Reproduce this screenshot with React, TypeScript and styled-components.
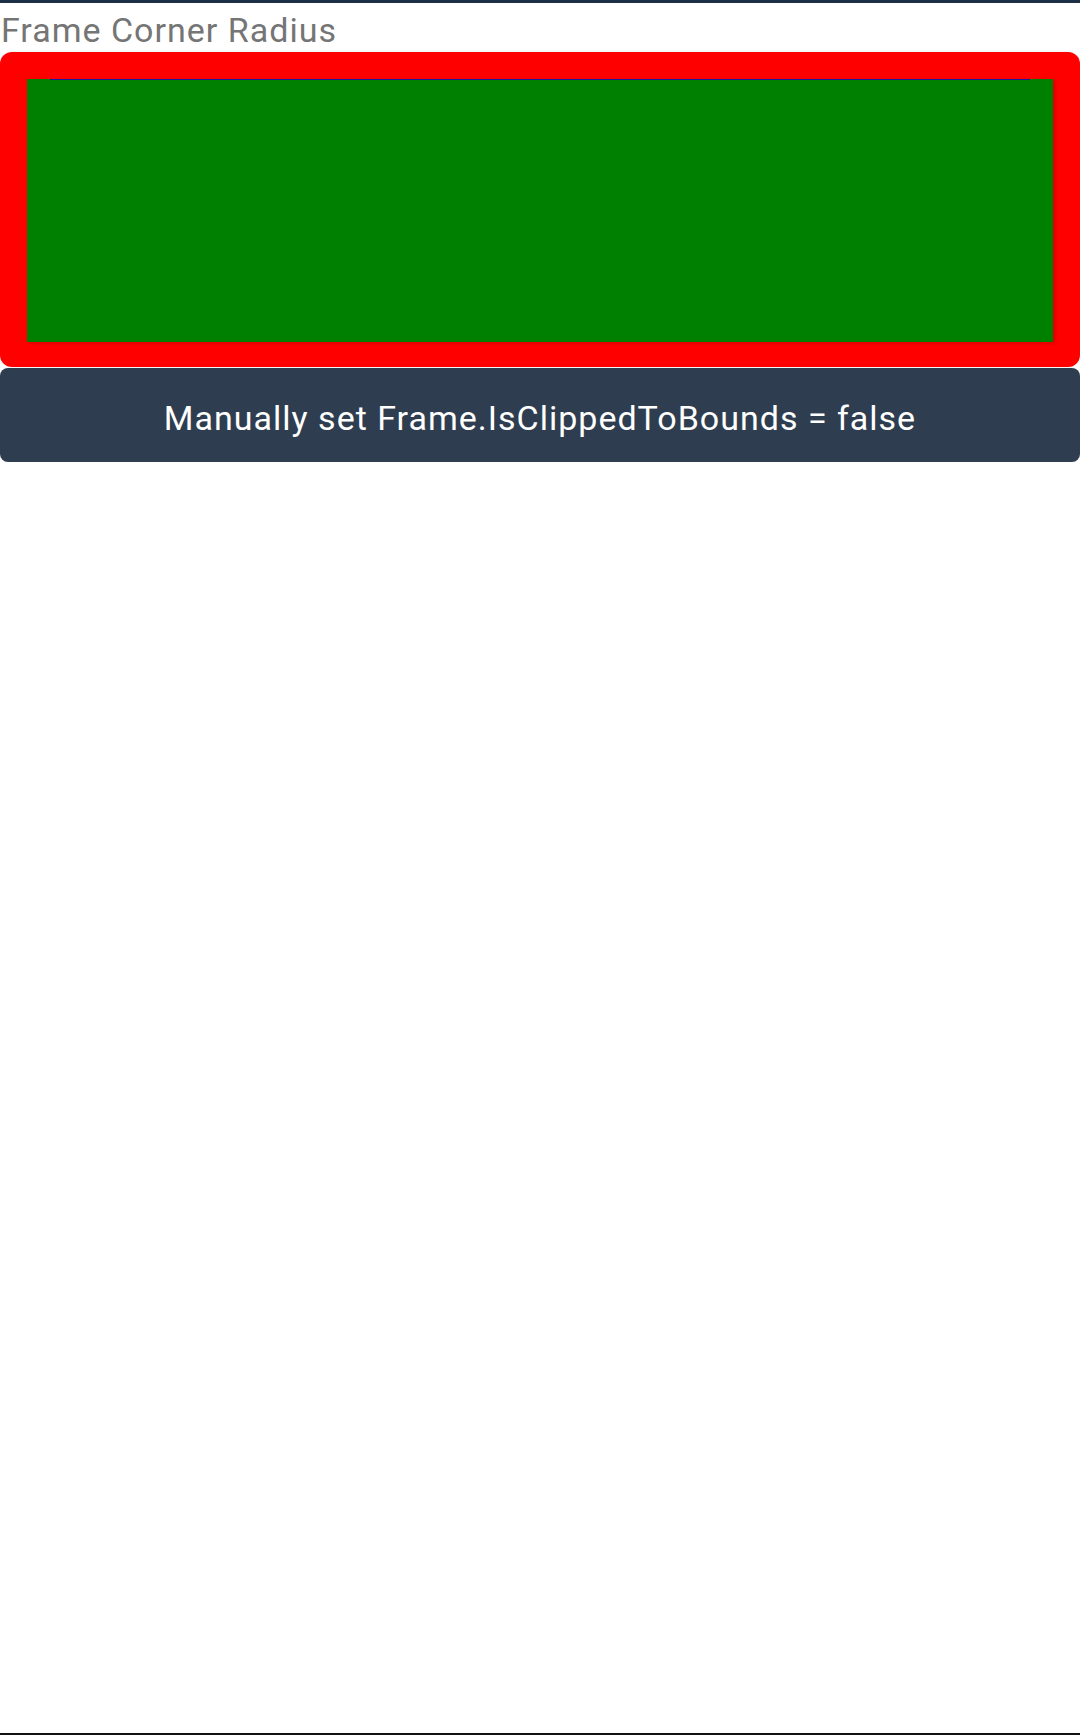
import React from 'react'
import styled, { createGlobalStyle } from 'styled-components'

const GlobalStyle = createGlobalStyle`
  html, body {
    margin: 0;
    padding: 0;
    height: 100%;
    background: #ffffff;
  }
  #root {
    min-height: 100vh;
    display: flex;
    flex-direction: column;
  }
`;

export default function App() {
  return (
    <>
      <GlobalStyle />
      <Page>
        <TopBar />
        <Title>Frame Corner Radius</Title>
        <Frame>
          <Content />
        </Frame>
        <ActionButton>Manually set Frame.IsClippedToBounds = false</ActionButton>
        <Spacer />
        <BottomBar />
      </Page>
    </>
  )
}

const Page = styled.div`
  flex: 1;
  display: flex;
  flex-direction: column;
  font-family: Roboto, "Liberation Sans", sans-serif;
`;

const TopBar = styled.div`
  height: 3px;
  background: #1e3048;
`;

const Title = styled.div`
  margin: 8px 0 2px 1px;
  font-size: 34px;
  letter-spacing: 1px;
  line-height: 39px;
  color: #757575;
`;

const Frame = styled.div`
  box-sizing: border-box;
  height: 315px;
  padding: 27px 27px 25px;
  background: #ff0000;
  border-radius: 12px;
  box-shadow: 0 0 3px rgba(0, 0, 0, 0.12);
`;

const Content = styled.div`
  height: 100%;
  background:
    linear-gradient(to right, transparent 23px, #1a1aa0 23px, #1a1aa0 calc(100% - 23px), transparent calc(100% - 23px)) top / 100% 1px no-repeat,
    #008000;
  box-shadow: 2px 1px 4px rgba(0, 0, 0, 0.18);
`;

const ActionButton = styled.button`
  box-sizing: border-box;
  height: 94px;
  margin: 1px 0 0;
  padding: 5px 0 0;
  border: none;
  border-radius: 8px;
  background: #2e3e50;
  color: #ffffff;
  font-family: Roboto, "Liberation Sans", sans-serif;
  font-size: 34px;
  letter-spacing: 1px;
  text-align: center;
  cursor: pointer;
`;

const Spacer = styled.div`
  flex: 1;
`;

const BottomBar = styled.div`
  height: 2px;
  background: #111111;
`;
